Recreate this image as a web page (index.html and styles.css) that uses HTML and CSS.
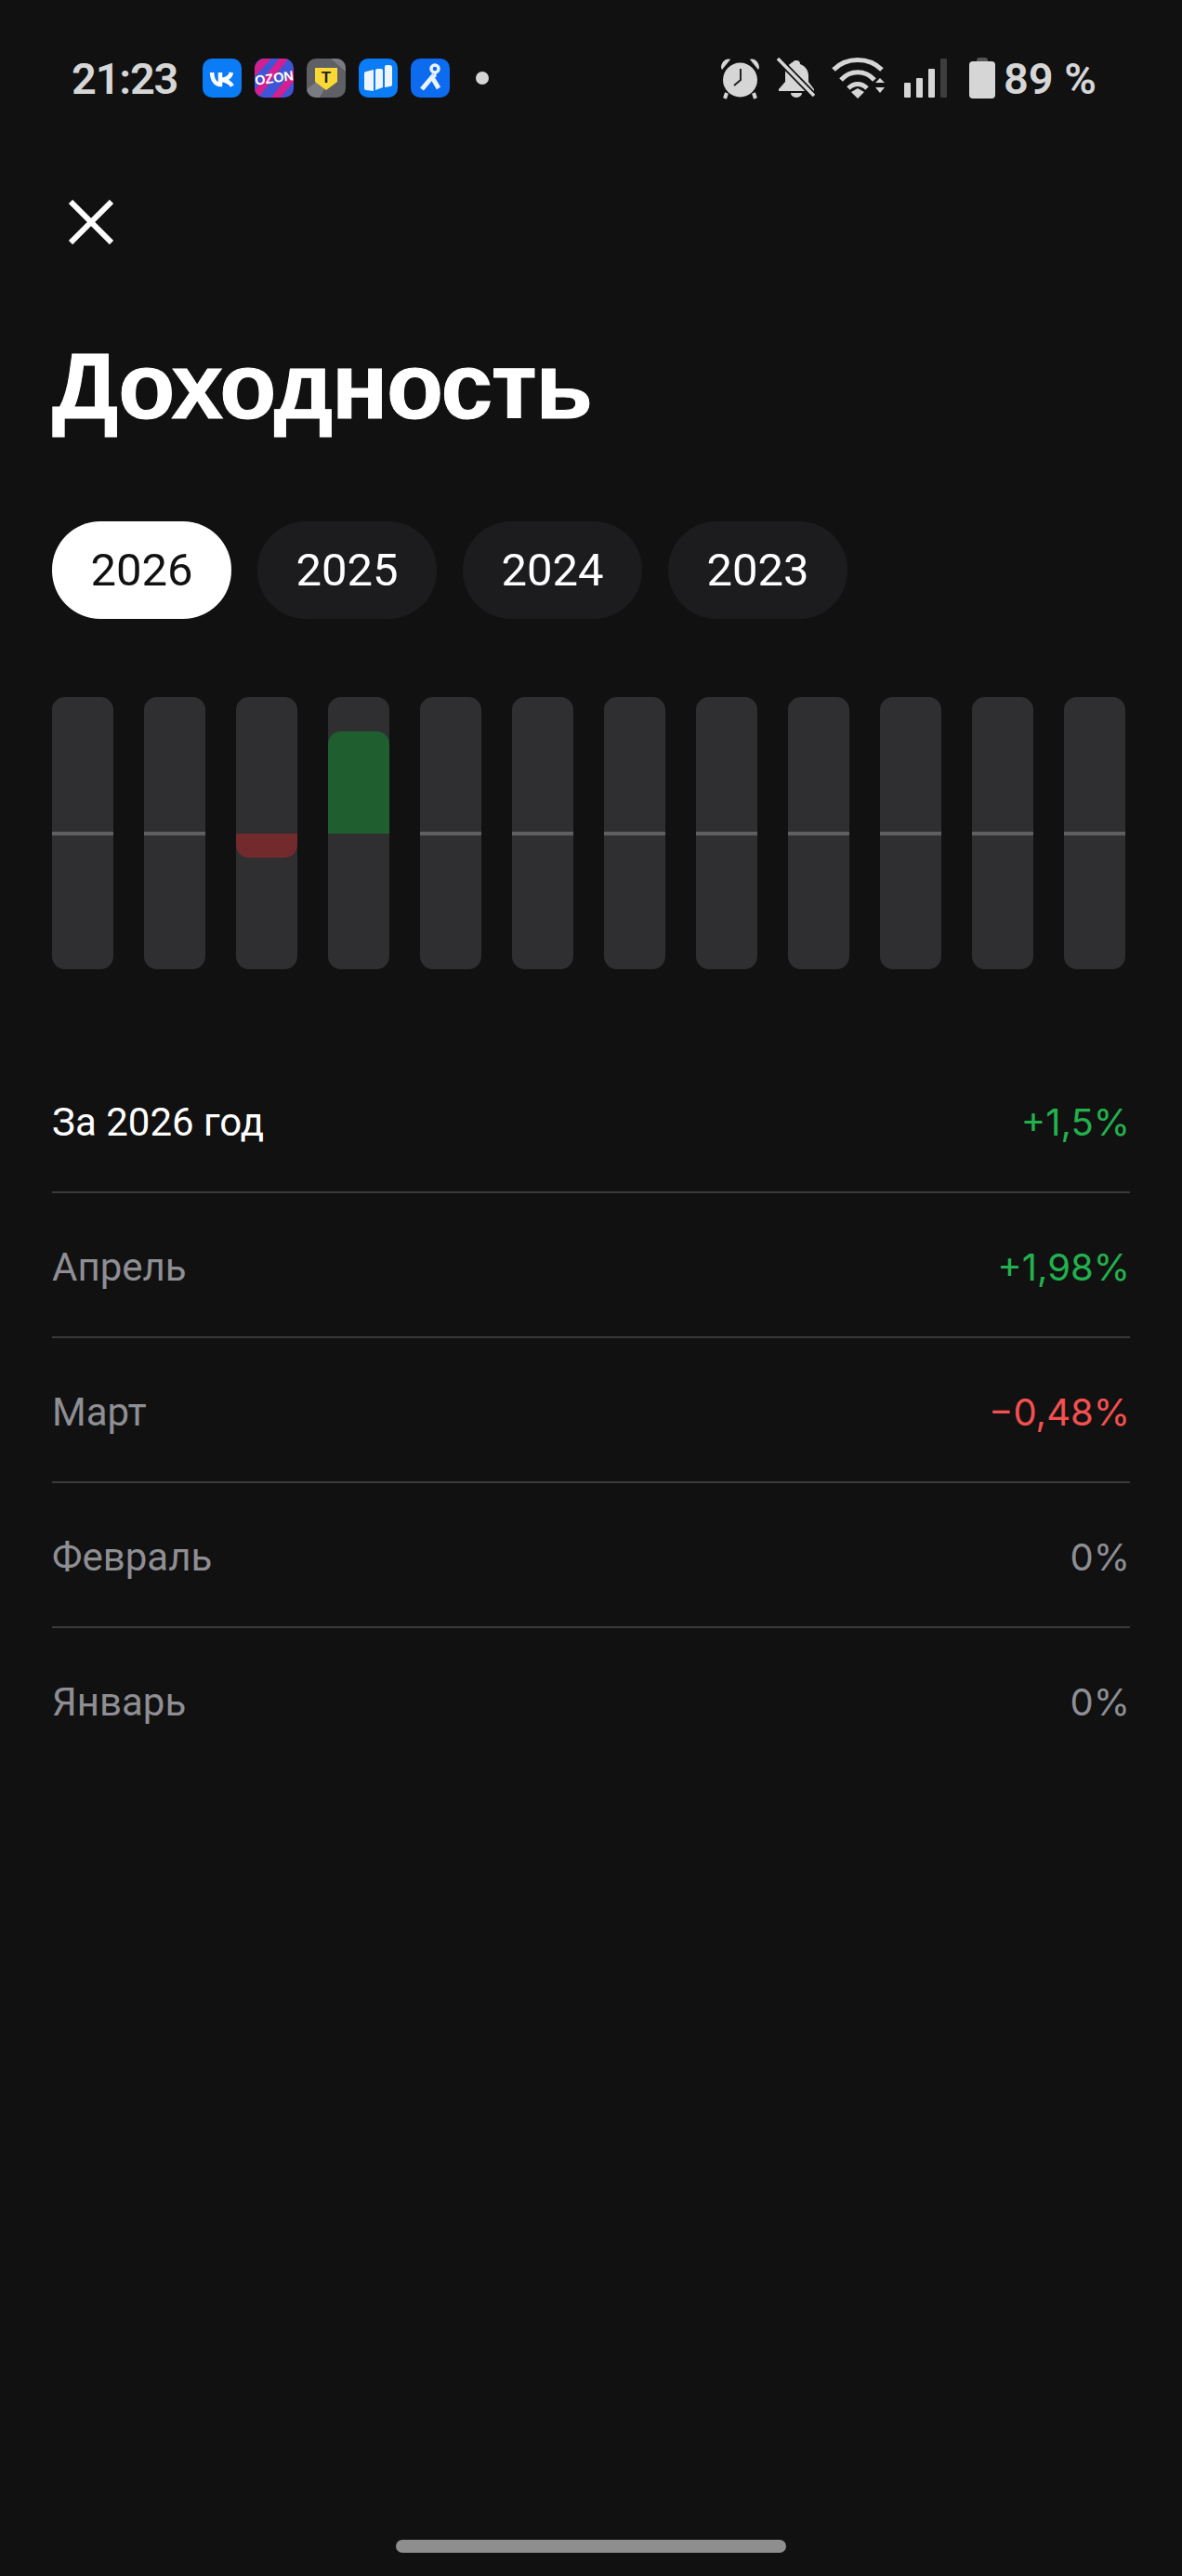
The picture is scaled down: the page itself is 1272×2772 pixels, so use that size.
FILE: index.html
```html
<!DOCTYPE html>
<html lang="ru">
<head>
    <meta charset="UTF-8">
    <meta name="viewport" content="width=device-width, initial-scale=1.0">
    <title>Доходность</title>
    <link rel="stylesheet" href="styles.css">
</head>
<body>
    <div class="screen">
        <div class="status-bar">
            <span class="time">21:23</span>
            <div class="app-icons">
                <svg class="app-icon" viewBox="0 0 42 42">
                    <rect width="42" height="42" rx="10" fill="#0a7cf5"/>
                    <path d="M10 15c.5 8 4 13 9 13V15M31 15c-1 5-5 7.500-11 8 5 .5 9 2 12 6.500" fill="none" stroke="#fff" stroke-width="4.500"/>
                </svg>
                <svg class="app-icon" viewBox="0 0 42 42">
                    <defs><clipPath id="ozonClip"><rect width="42" height="42" rx="10"/></clipPath></defs>
                    <g clip-path="url(#ozonClip)">
                        <rect width="42" height="42" fill="#3f55d8"/>
                        <path d="M-6 20L18-6M2 38L36-6M18 48L52 6M34 50L52 30" stroke="#d41f8e" stroke-width="8" fill="none"/>
                        <text class="ozon-text" x="21" y="26" transform="rotate(-8 21 21)">OZON</text>
                    </g>
                </svg>
                <svg class="app-icon" viewBox="0 0 42 42">
                    <defs><clipPath id="tbankClip"><rect width="42" height="42" rx="10"/></clipPath></defs>
                    <g clip-path="url(#tbankClip)">
                        <rect width="42" height="42" fill="#5f5f66"/>
                        <path d="M0 42V33L12 24H24L14 42ZM26 0L42 14V0Z" fill="#7b7b82"/>
                    </g>
                    <path d="M9 10H33V25L21 34L9 25Z" fill="#fbd934"/>
                    <text class="tbank-text" x="21" y="26">Т</text>
                </svg>
                <svg class="app-icon" viewBox="0 0 42 42">
                    <rect width="42" height="42" rx="10" fill="#0a7cf5"/>
                    <path d="M6 16Q6 14 8 14L16 12V35L8 34Q6 34 6 32ZM18 13Q18 11 20 11L24 11Q26 11 26 13V31L18 34ZM28 9Q28 7 30 7L33 7Q36 7 36 10V28Q36 30 34 30L28 31Z" fill="#eef5ff"/>
                </svg>
                <svg class="app-icon" viewBox="0 0 42 42">
                    <rect width="42" height="42" rx="10" fill="#0d6bf0"/>
                    <circle cx="26" cy="11" r="4" fill="none" stroke="#eaf3ff" stroke-width="3.500"/>
                    <path d="M26 15v5" stroke="#eaf3ff" stroke-width="3"/>
                    <path d="M12 33L23 20L30 32" fill="none" stroke="#eaf3ff" stroke-width="5"/>
                </svg>
            </div>
            <span class="status-dot"></span>
            <div class="status-right">
                <svg class="ic-alarm" viewBox="0 0 43 45">
                    <path d="M1 11C1 5 6 0 11 2L2 13ZM42 11C42 5 37 0 32 2L41 13Z" fill="#d6d6d6"/>
                    <circle cx="21.500" cy="24" r="18.500" fill="#d6d6d6"/>
                    <path d="M7 38l-2 6M36 38l2 6" stroke="#d6d6d6" stroke-width="4"/>
                    <path d="M22 12V24L15 30" fill="none" stroke="#222" stroke-width="2"/>
                </svg>
                <svg class="ic-bell" viewBox="0 0 42 44">
                    <path d="M21 3a4 4 0 0 1 4 4c6 2 9 7 9 13v6l6 8v2H2v-2l7-8v-9c0-6 4-10 8-12a4 4 0 0 1 4-2ZM15 38h12a6 5 0 0 1-12 0Z" fill="#d6d6d6"/>
                    <path d="M1 1L40 41" stroke="#111112" stroke-width="7"/>
                    <path d="M1 1L40 41" stroke="#d6d6d6" stroke-width="3.500"/>
                </svg>
                <svg class="ic-wifi" viewBox="0 0 58 44">
                    <path d="M2 13C16-1 40-1 54 13M10 24C20 13 36 13 46 24M18 33C24 27 32 27 38 33" fill="none" stroke="#d6d6d6" stroke-width="5"/>
                    <path d="M21 37L28 33L35 37L28 44ZM47 27L52 22L57 27ZM47 32H57L52 38Z" fill="#d6d6d6"/>
                </svg>
                <div class="signal">
                    <span class="sig-bar sig-1"></span>
                    <span class="sig-bar sig-2"></span>
                    <span class="sig-bar sig-3"></span>
                    <span class="sig-bar sig-4"></span>
                </div>
                <div class="battery"><span class="battery-cap"></span></div>
                <span class="battery-text">89 %</span>
            </div>
        </div>

        <svg class="close-icon" viewBox="0 0 48 48">
            <path d="M2 2L46 46M46 2L2 46" stroke="#fff" stroke-width="6"/>
        </svg>

        <h1 class="title">Доходность</h1>

        <div class="years">
            <span class="year active">2026</span>
            <span class="year">2025</span>
            <span class="year">2024</span>
            <span class="year">2023</span>
        </div>

        <div class="chart">
            <div class="bar"><span class="zero"></span></div>
            <div class="bar"><span class="zero"></span></div>
            <div class="bar"><span class="fill neg"></span></div>
            <div class="bar"><span class="fill pos"></span></div>
            <div class="bar"><span class="zero"></span></div>
            <div class="bar"><span class="zero"></span></div>
            <div class="bar"><span class="zero"></span></div>
            <div class="bar"><span class="zero"></span></div>
            <div class="bar"><span class="zero"></span></div>
            <div class="bar"><span class="zero"></span></div>
            <div class="bar"><span class="zero"></span></div>
            <div class="bar"><span class="zero"></span></div>
        </div>

        <div class="rows">
            <div class="row total"><span>За 2026 год</span><span class="value up">+1,5%</span></div>
            <div class="row"><span>Апрель</span><span class="value up">+1,98%</span></div>
            <div class="row"><span>Март</span><span class="value down">−0,48%</span></div>
            <div class="row"><span>Февраль</span><span class="value">0%</span></div>
            <div class="row"><span>Январь</span><span class="value">0%</span></div>
        </div>

        <div class="home-bar"></div>
    </div>
</body>
</html>
```

FILE: styles.css
```css
html, body {
    margin: 0;
    padding: 0;
    background: #111112;
}
.screen {
    position: relative;
    width: 1272px;
    height: 2772px;
    overflow: hidden;
    background: #111112;
    font-family: Roboto, "Liberation Sans", sans-serif;
    color: #fff;
}

/* status bar */
.status-bar {
    display: flex;
    align-items: center;
    height: 42px;
    padding: 63px 92px 0 77px;
}
.time {
    width: 141px;
    font-size: 47px;
    font-weight: 600;
    letter-spacing: -1.200px;
    color: #d6d6d6;
}
.app-icons {
    display: flex;
    gap: 14px;
}
.app-icon {
    display: block;
    width: 42px;
    height: 42px;
}
.ozon-text {
    font-family: "Liberation Sans", sans-serif;
    font-size: 14.500px;
    font-weight: 700;
    fill: #fff;
    text-anchor: middle;
}
.tbank-text {
    font-family: "Liberation Sans", sans-serif;
    font-size: 17px;
    font-weight: 700;
    fill: #222;
    text-anchor: middle;
}
.status-dot {
    width: 14px;
    height: 14px;
    margin-left: 28px;
    border-radius: 50%;
    background: #d6d6d6;
}
.status-right {
    display: flex;
    align-items: center;
    margin-left: auto;
}
.ic-alarm { width: 43px; height: 45px; margin-right: 18px; }
.ic-bell { width: 42px; height: 44px; margin-right: 17px; }
.ic-wifi { width: 58px; height: 44px; margin-right: 20px; }
.signal {
    display: flex;
    align-items: flex-end;
    gap: 6px;
    height: 42px;
    margin-right: 24px;
}
.sig-bar {
    width: 7px;
    border-radius: 1px;
    background: #d6d6d6;
}
.sig-1 { height: 16px; }
.sig-2 { height: 21px; }
.sig-3 { height: 31px; }
.sig-4 { height: 42px; background: #3d3d3d; }
.battery {
    position: relative;
    width: 28px;
    height: 40px;
    margin: 4px 9px 0 0;
    border-radius: 4px;
    background: #d6d6d6;
}
.battery-cap {
    position: absolute;
    top: -4px;
    left: 8px;
    width: 12px;
    height: 4px;
    border-radius: 3px 3px 0 0;
    background: #555;
}
.battery-text {
    font-size: 47px;
    font-weight: 600;
    color: #d6d6d6;
    white-space: nowrap;
}

.close-icon {
    display: block;
    width: 48px;
    height: 48px;
    margin: 110px 0 0 74px;
}

.title {
    margin: 95px 0 0 56px;
    font-family: "Liberation Sans", sans-serif;
    font-size: 100px;
    font-weight: 700;
    line-height: 114px;
    letter-spacing: -1.300px;
    -webkit-text-stroke: 1px #fff;
}

/* year pills */
.years {
    display: flex;
    gap: 28px;
    margin: 89px 0 0 56px;
}
.year {
    display: flex;
    align-items: center;
    justify-content: center;
    width: 193px;
    height: 105px;
    border-radius: 52px;
    background: #1c1c1e;
    font-size: 49px;
}
.year.active {
    background: #fff;
    color: #111;
}

/* monthly bars */
.chart {
    display: flex;
    gap: 33px;
    margin: 84px 0 0 56px;
}
.bar {
    position: relative;
    width: 66px;
    height: 293px;
    border-radius: 14px;
    background: #2f2f31;
}
.zero {
    position: absolute;
    top: 145px;
    left: 0;
    right: 0;
    height: 4px;
    background: #5f5f61;
}
.fill {
    position: absolute;
    left: 0;
    right: 0;
}
.fill.neg {
    top: 147px;
    height: 26px;
    border-radius: 0 0 14px 14px;
    background: #722a2c;
}
.fill.pos {
    top: 37px;
    height: 110px;
    border-radius: 14px 14px 0 0;
    background: #1f5f2f;
}

/* value rows */
.rows {
    margin: 85px 56px 0;
}
.row {
    display: flex;
    align-items: center;
    justify-content: space-between;
    height: 149px;
    padding-top: 5px;
    border-bottom: 2px solid #3a3a3c;
    font-size: 42px;
    color: #8e8e93;
}
.row:last-child {
    border-bottom: 0;
}
.row.total {
    color: #fff;
}
.value {
    font-family: Inter, Roboto, sans-serif;
    font-size: 40px;
}
.up { color: #22b14c; }
.down { color: #f4504f; }

.home-bar {
    position: absolute;
    left: 426px;
    bottom: 25px;
    width: 420px;
    height: 14px;
    border-radius: 7px;
    background: #8e8e8e;
}
```
